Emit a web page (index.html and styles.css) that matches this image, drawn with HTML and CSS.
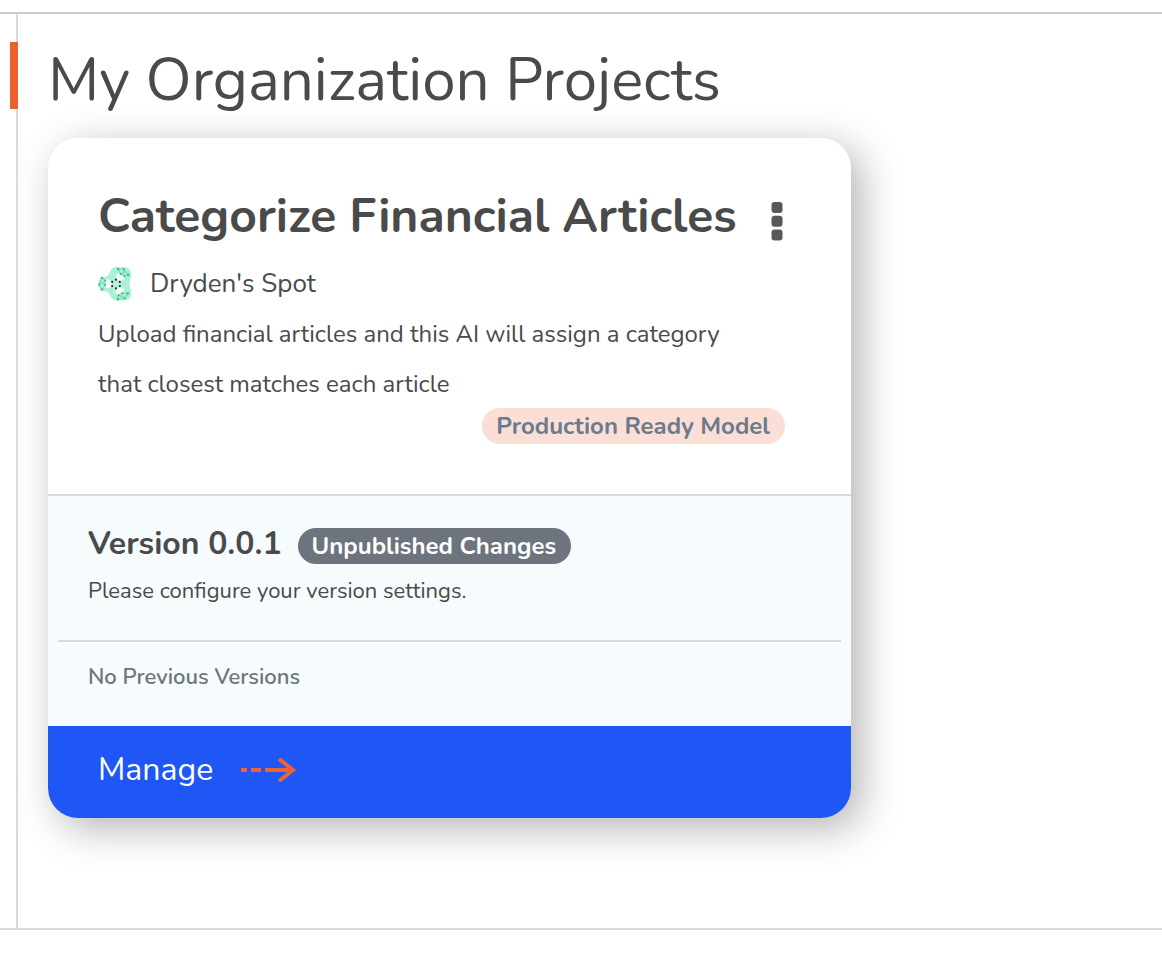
FILE: index.html
```html
<!DOCTYPE html>
<html lang="en">
<head>
<meta charset="utf-8">
<meta name="viewport" content="width=device-width, initial-scale=1">
<title>My Organization Projects</title>
<link rel="stylesheet" href="styles.css">
</head>
<body>
<div class="page">
  <main class="panel">
    <h1 class="heading">My Organization Projects</h1>
    <article class="card">
      <div class="summary">
        <header class="card-header">
          <h2 class="card-title">Categorize Financial Articles</h2>
          <button class="menu" type="button" aria-label="Project options">
            <svg width="12" height="39" viewBox="0 0 12 39" fill="#58585a" aria-hidden="true">
              <rect x=".5" width="11" height="11" rx="3"/>
              <rect x=".5" y="13.7" width="11" height="11" rx="3"/>
              <rect x=".5" y="27.4" width="11" height="11" rx="3"/>
            </svg>
          </button>
        </header>
        <div class="owner">
          <svg class="avatar" width="36" height="36" viewBox="0 0 36 36" aria-hidden="true">
            <defs>
              <g id="petal">
                <path d="M7 14.500 10 13l4 3v4l-4 2.500-3-1.500Z" fill="#f1f7f5"/>
                <g fill="none" stroke="#6fdaa8" stroke-width=".9">
                  <path d="m4 12 3 2.500L4 17l-3 2 3 4.500 3-4.500-3-2M4 12l-3 7M7 14.500V19"/>
                </g>
                <g fill="#45ba7d">
                  <circle cx="4" cy="12" r="1.200"/><circle cx="7" cy="14.500" r="1"/>
                  <circle cx="1.300" cy="18.500" r="1"/><circle cx="7" cy="19" r="1"/>
                  <circle cx="4" cy="23.500" r="1.300"/>
                </g>
              </g>
            </defs>
            <path d="M12 6C14 1 18 0 22 1.500c6-2 12 1.500 11 7.500 1 3-1.500 5-1.500 9s2.500 6 1.500 9c1 6-5 9-11 7-4 1.500-8 0-10-4.500-1-3-3-4.500-6-4.500-8-1-8-13 0-14 3 0 5-2 6-5Z" fill="#aaf1d7"/>
            <use href="#petal"/>
            <use href="#petal" transform="rotate(120 18 18)"/>
            <use href="#petal" transform="rotate(240 18 18)"/>
            <circle cx="18" cy="18" r="4" fill="#b9f2df"/>
            <g fill="#17332e">
              <circle cx="18" cy="13.700" r="1.100"/><circle cx="21.800" cy="15.900" r="1.100"/>
              <circle cx="21.800" cy="20.100" r="1.100"/><circle cx="18" cy="22.300" r="1.100"/>
              <circle cx="14.200" cy="20.100" r="1.100"/><circle cx="14.200" cy="15.900" r="1.100"/>
            </g>
          </svg>
          <span>Dryden's Spot</span>
        </div>
        <p class="description">Upload financial articles and this AI will assign a category that closest matches each article</p>
        <div class="status"><span class="badge badge-ready">Production Ready Model</span></div>
      </div>
      <section class="versions">
        <div class="current">
          <div class="version-row">
            <h3 class="version">Version 0.0.1</h3>
            <span class="badge badge-changes">Unpublished Changes</span>
          </div>
          <p class="hint">Please configure your version settings.</p>
        </div>
        <p class="previous">No Previous Versions</p>
      </section>
      <a class="manage" href="#manage">
        <span>Manage</span>
        <svg width="56" height="24" viewBox="0 0 56 24" fill="none" stroke="#ec6434" stroke-width="4" aria-hidden="true">
          <path d="M0 12h6M10 12h10M24 12h28"/>
          <path d="m38 1 14 11-14 11"/>
        </svg>
      </a>
    </article>
  </main>
</div>
</body>
</html>
```
FILE: styles.css
```css
* {
  box-sizing: border-box;
}

body {
  margin: 0;
  background: #fff;
  color: #4a4a4a;
  font-family: Nunito, Lato, "Noto Sans", sans-serif;
}

h1, h2, h3, p {
  margin: 0;
}

.page {
  margin-top: 12px;
  padding-left: 16px;
  border-top: 2px solid #ccc;
  border-bottom: 2px solid #dadada;
}

.panel {
  padding: 28px 30px 110px 0;
  border-left: 2px solid #dadada;
}

.heading {
  margin: 0 0 29px -8px;
  padding: 9px 0 0 30px;
  border-left: 8px solid #ed602f;
  font-size: 60px;
  font-weight: 400;
  line-height: 58px;
}

.card {
  max-width: 803px;
  margin-left: 30px;
  overflow: hidden;
  border-radius: 30px;
  background: #fff;
  box-shadow: 10px 10px 40px rgba(0, 0, 0, 0.3);
}

.summary {
  padding: 48px 66px 50px 50px;
}

.card-header {
  display: flex;
  align-items: center;
  justify-content: space-between;
}

.card-title {
  font-size: 48px;
  font-weight: 700;
  line-height: 60px;
}

.menu {
  display: flex;
  margin: 10px 2px 0 0;
  padding: 0;
  border: 0;
  background: none;
  cursor: pointer;
}

.owner {
  display: flex;
  align-items: center;
  gap: 16px;
  padding-top: 20px;
  font-size: 26px;
  line-height: 36px;
}

.description {
  max-width: 660px;
  padding-top: 7px;
  font-size: 24px;
  line-height: 50px;
}

.status {
  display: flex;
  justify-content: flex-end;
  margin-top: -1px;
}

.badge {
  padding: 0 15px 0 14px;
  border-radius: 18px;
  font-size: 24px;
  font-weight: 700;
  line-height: 36px;
}

.badge-ready {
  background: #fadfd6;
  color: #6d7a8d;
}

.badge-changes {
  background: #6d747d;
  color: #fff;
}

.versions {
  padding: 0 10px;
  border-top: 2px solid #d7dcdf;
  background: #f6fbfe;
}

.current {
  padding: 28px 30px 34px;
  border-bottom: 2px solid #dadada;
}

.version-row {
  display: flex;
  align-items: flex-end;
  gap: 16px;
}

.version {
  font-size: 32px;
  font-weight: 700;
  line-height: 40px;
}

.hint {
  padding-top: 12px;
  font-size: 22px;
  line-height: 30px;
}

.previous {
  padding: 20px 30px 34px;
  color: #6d747d;
  font-size: 22px;
  font-weight: 600;
  line-height: 30px;
}

.manage {
  display: flex;
  align-items: center;
  gap: 28px;
  padding: 22px 50px 26px;
  background: #1f57f6;
  color: #fff;
  font-size: 32px;
  line-height: 44px;
  text-decoration: none;
}
```
